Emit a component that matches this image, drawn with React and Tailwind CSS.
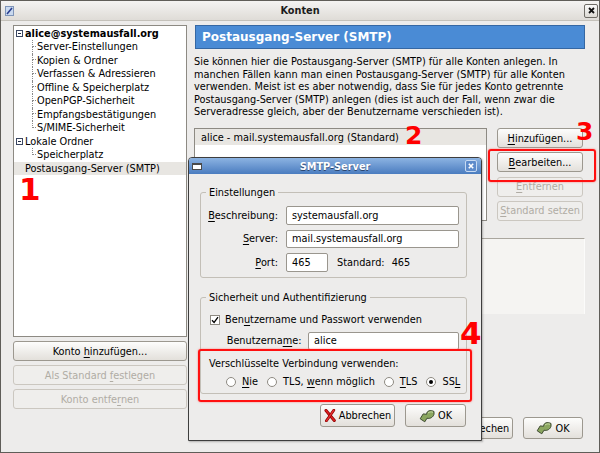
import React from 'react'

function U({ children }) {
    return <span className="underline underline-offset-[1.5px]">{children}</span>
}

function Btn({ children, disabled, className = '' }) {
    const look = disabled
        ? 'border-[#cbc7c0] bg-[#efeeec] text-[#b0aca4]'
        : 'border-[#9c988f] bg-linear-to-b from-[#fdfdfc] to-[#e3e0db] text-black'
    return (
        <div className={`flex items-center justify-center gap-[3px] rounded-[3px] border whitespace-nowrap ${look} ${className}`}>
            {children}
        </div>
    )
}

function OkIcon() {
    return (
        <svg width="16" height="14" viewBox="0 0 16 14">
            <path d="M15 2.5 C11.5 0.6 7.5 1.8 7.6 5.3 L4.2 4.9 L1.2 9.8 L5.8 12.8 L8 9.2 C11.2 10 14.2 8.2 15 5.2 Z" fill="#8ba65f" stroke="#3d4a30" strokeWidth="1" strokeLinejoin="round" />
            <path d="M9 4 C10.5 2.8 12.5 2.6 14 3.3" stroke="#c9dba6" strokeWidth="1" fill="none" />
        </svg>
    )
}

function CancelIcon() {
    return (
        <svg width="12" height="13" viewBox="0 0 12 13">
            <path d="M2 1.5 L10.3 11.5" stroke="#8c0000" strokeWidth="3" strokeLinecap="round" />
            <path d="M2 1.5 L10.3 11.5" stroke="#e02020" strokeWidth="1.6" strokeLinecap="round" />
            <path d="M9.8 1.2 L2.4 11.8" stroke="#8c0000" strokeWidth="2.8" strokeLinecap="round" />
            <path d="M9.8 1.2 L2.4 11.8" stroke="#e83030" strokeWidth="1.4" strokeLinecap="round" />
        </svg>
    )
}

function Radio({ checked }) {
    return (
        <span className="w-[10px] h-[10px] shrink-0 rounded-full border border-[#8e8a82] bg-white flex items-center justify-center">
            {checked && <span className="w-[4px] h-[4px] rounded-full bg-black" />}
        </span>
    )
}

const tree = [
    { label: 'alice@systemausfall.org', kind: 'root', bold: true },
    { label: 'Server-Einstellungen', kind: 'child' },
    { label: 'Kopien & Ordner', kind: 'child' },
    { label: 'Verfassen & Adressieren', kind: 'child' },
    { label: 'Offline & Speicherplatz', kind: 'child' },
    { label: 'OpenPGP-Sicherheit', kind: 'child' },
    { label: 'Empfangsbestätigungen', kind: 'child' },
    { label: 'S/MIME-Sicherheit', kind: 'child', last: true },
    { label: 'Lokale Ordner', kind: 'root' },
    { label: 'Speicherplatz', kind: 'child', last: true },
    { label: 'Postausgang-Server (SMTP)', kind: 'leaf', selected: true },
]

export default function App() {
    return (
        <div className="w-[600px] h-[453px] relative overflow-hidden bg-[#edeceb] border border-[#5f5d58] font-['DejaVu_Sans',sans-serif] text-[9.75px] leading-[13px] text-black">
            {/* Titelleiste */}
            <div className="h-[20px] grid grid-cols-[1fr_auto_1fr] items-center bg-linear-to-b from-[#f4f3f2] to-[#dfdcd7] border-b border-[#c4c1ba]">
                <div className="pl-[4px]">
                    <svg width="9" height="10" viewBox="0 0 9 10">
                        <rect x="0.5" y="0.5" width="8" height="9" fill="#c9d9ef" stroke="#7f95b8" />
                        <path d="M2 8 L7 2" stroke="#2b3f8f" strokeWidth="1.6" />
                    </svg>
                </div>
                <div className="font-bold text-[#1c1c1c]">Konten</div>
                <div className="flex justify-end pr-[1px]">
                    <div className="w-[14px] h-[14px] rounded-[2px] border border-[#6f6c66] bg-linear-to-b from-[#fafafa] to-[#dddad4] flex items-center justify-center">
                        <svg width="7" height="7" viewBox="0 0 7 7">
                            <path d="M1 1 L6 6 M6 1 L1 6" stroke="#111" strokeWidth="1.8" />
                        </svg>
                    </div>
                </div>
            </div>

            <div className="flex pl-[12px] pt-[4px]">
                {/* linke Spalte */}
                <div className="w-[174px] flex flex-col">
                    <div className="h-[312px] bg-white border border-[#8d8a83] pt-[0.5px]">
                        {tree.map((row) => (
                            <div key={row.label} className={`h-[13.5px] flex items-center whitespace-nowrap ${row.selected ? 'bg-[#e8e6e2]' : ''}`}>
                                {row.kind === 'root' && (
                                    <span className="ml-[2px] mr-[2px] w-[7px] h-[7px] border border-[#3a4661] bg-white flex items-center justify-center">
                                        <span className="w-[3px] h-px bg-[#1f2a44]" />
                                    </span>
                                )}
                                {row.kind === 'child' && (
                                    <span className="ml-[18px] mr-[1px] w-[4px] self-stretch flex flex-col">
                                        <span className="h-1/2 border-l border-b border-dotted border-[#8a8a8a]" />
                                        <span className={`flex-1 ${row.last ? '' : 'border-l border-dotted border-[#8a8a8a]'}`} />
                                    </span>
                                )}
                                {row.kind === 'leaf' && <span className="w-[11px]" />}
                                <span className={row.bold ? 'font-bold' : ''}>{row.label}</span>
                            </div>
                        ))}
                    </div>
                    <div className="mt-[4px] flex flex-col gap-[4px]">
                        <Btn className="h-[20px]"><span>Konto <U>h</U>inzufügen...</span></Btn>
                        <Btn disabled className="h-[20px]"><span>Als Standard <U>f</U>estlegen</span></Btn>
                        <Btn disabled className="h-[20px]"><span>Konto entfe<U>r</U>nen</span></Btn>
                    </div>
                </div>

                {/* rechte Spalte */}
                <div className="ml-[7px] w-[391px] flex flex-col">
                    <div className="ml-[1px] h-[24px] bg-[#4a8bd5] border border-[#3567a3] flex items-center pl-[6px] text-white font-bold text-[12px]">
                        Postausgang-Server (SMTP)
                    </div>
                    <p className="mt-[7px] leading-[12.5px] whitespace-nowrap">
                        Sie können hier die Postausgang-Server (SMTP) für alle Konten anlegen. In<br />
                        manchen Fällen kann man einen Postausgang-Server (SMTP) für alle Konten<br />
                        verwenden. Meist ist es aber notwendig, dass Sie für jedes Konto getrennte<br />
                        Postausgang-Server (SMTP) anlegen (dies ist auch der Fall, wenn zwar die<br />
                        Serveradresse gleich, aber der Benutzername verschieden ist).
                    </p>
                    <div className="mt-[9.5px] flex">
                        <div className="w-[293px] h-[93px] bg-white border border-[#8d8a83]">
                            <div className="h-[16px] bg-[#e8e6e2] flex items-center pl-[6px]">
                                alice - mail.systemausfall.org (Standard)
                            </div>
                        </div>
                        <div className="ml-[10px] w-[86px] h-[93px] flex flex-col justify-between">
                            <Btn className="h-[20px]"><span><U>H</U>inzufügen...</span></Btn>
                            <Btn className="h-[20px]"><span><U>B</U>earbeiten...</span></Btn>
                            <Btn disabled className="h-[20px]"><span><U>E</U>ntfernen</span></Btn>
                            <Btn disabled className="h-[20px]"><span><U>S</U>tandard setzen</span></Btn>
                        </div>
                    </div>
                    <div className="mt-[17px] h-[76px] bg-[#f5f4f2] border-t border-[#aaa69e] border-r border-r-[#fbfbfa]" />
                    <div className="mt-[103px] flex justify-end gap-[10px] pr-[2px]">
                        <Btn className="w-[75px] h-[22px]"><CancelIcon /><span>Abbrechen</span></Btn>
                        <Btn className="w-[60px] h-[22px]"><OkIcon /><span>OK</span></Btn>
                    </div>
                </div>
            </div>

            {/* Dialog SMTP-Server */}
            <div className="absolute left-[187px] top-[156px] w-[294px] h-[284px] bg-[#edeceb] border border-[#3e3e3e] rounded-t-[4px] shadow-[1px_1px_2px_rgba(0,0,0,0.25)]">
                <div className="h-[16px] grid grid-cols-[1fr_auto_1fr] items-center bg-linear-to-b from-[#8cb3e2] to-[#4a7cbf] rounded-t-[3px]">
                    <div className="pl-[3px]">
                        <div className="w-[10px] h-[7px] bg-white border border-[#4a4a4a] border-t-2" />
                    </div>
                    <div className="font-bold text-white [text-shadow:0_1px_0_#2a4670]">SMTP-Server</div>
                    <div className="flex justify-end pr-[4px]">
                        <div className="w-[12px] h-[12px] rounded-[2px] border border-[#c7daf2] bg-[#5d8bcb] flex items-center justify-center">
                            <svg width="6" height="6" viewBox="0 0 6 6">
                                <path d="M0.8 0.8 L5.2 5.2 M5.2 0.8 L0.8 5.2" stroke="#fff" strokeWidth="1.6" />
                            </svg>
                        </div>
                    </div>
                </div>

                <div className="pl-[11px]">
                    {/* Einstellungen */}
                    <div className="relative mt-[18px] w-[267px] h-[86px] border border-[#c3bfb7] rounded-[3px] pt-[13px] pr-[7px] flex flex-col gap-[5px]">
                        <span className="absolute -top-[7px] left-[5px] px-[3px] bg-[#edeceb]">Einstellungen</span>
                        <div className="h-[18.5px] flex items-center">
                            <span className="w-[77px] text-right"><U>B</U>eschreibung:</span>
                            <div className="ml-[8px] flex-1 h-full bg-white border border-[#9a968e] rounded-[2px] pl-[5px] flex items-center">systemausfall.org</div>
                        </div>
                        <div className="h-[18.5px] flex items-center">
                            <span className="w-[77px] text-right"><U>S</U>erver:</span>
                            <div className="ml-[8px] flex-1 h-full bg-white border border-[#9a968e] rounded-[2px] pl-[5px] flex items-center">mail.systemausfall.org</div>
                        </div>
                        <div className="h-[18.5px] flex items-center">
                            <span className="w-[77px] text-right"><U>P</U>ort:</span>
                            <div className="ml-[8px] w-[42px] h-full bg-white border border-[#9a968e] rounded-[2px] pl-[5px] flex items-center">465</div>
                            <span className="ml-[9px]">Standard:</span>
                            <span className="ml-[7px]">465</span>
                        </div>
                    </div>

                    {/* Sicherheit */}
                    <div className="relative mt-[19px] w-[267px] h-[97px] border border-[#c3bfb7] rounded-[3px] pt-[15px] pr-[7px]">
                        <span className="absolute -top-[7px] left-[5px] px-[3px] bg-[#edeceb]">Sicherheit und Authentifizierung</span>
                        <div className="h-[13px] flex items-center pl-[9px] gap-[5px]">
                            <span className="w-[10px] h-[10px] border border-[#8e8a82] bg-white flex items-center justify-center">
                                <svg width="8" height="8" viewBox="0 0 8 8">
                                    <path d="M1 4.2 L3.1 6.4 L7 1.2" stroke="#000" strokeWidth="1.3" fill="none" />
                                </svg>
                            </span>
                            <span>Ben<U>u</U>tzername und Passwort verwenden</span>
                        </div>
                        <div className="mt-[5.7px] h-[18.3px] flex items-center pl-[25.7px]">
                            <span className="w-[81.3px] whitespace-nowrap">Benutzerna<U>m</U>e:</span>
                            <div className="flex-1 h-full bg-white border border-[#9a968e] rounded-[2px] pl-[5px] flex items-center">alice</div>
                        </div>
                        <div className="mt-[7.5px] h-[13px] flex items-center pl-[8px] whitespace-nowrap">Verschlüsselte Verbindung verwenden:</div>
                        <div className="mt-[4.7px] h-[13px] flex items-center pl-[25px] gap-[9px] whitespace-nowrap">
                            <span className="flex items-center gap-[6px]"><Radio /><span><U>N</U>ie</span></span>
                            <span className="flex items-center gap-[6px]"><Radio /><span>TLS, <U>w</U>enn möglich</span></span>
                            <span className="flex items-center gap-[6px]"><Radio /><span><U>T</U>LS</span></span>
                            <span className="flex items-center gap-[6px]"><Radio checked /><span>SS<U>L</U></span></span>
                        </div>
                    </div>

                    <div className="mt-[10px] w-[267px] flex justify-end gap-[10px] pr-[1px]">
                        <Btn className="w-[75px] h-[23px]"><CancelIcon /><span>Abbrechen</span></Btn>
                        <Btn className="w-[61px] h-[23px]"><OkIcon /><span>OK</span></Btn>
                    </div>
                </div>
            </div>

            {/* Markierungen */}
            <div className="absolute left-[487px] top-[148px] w-[108px] h-[33px] border-2 border-[#ff1010] rounded-[3px] shadow-[0_0_2px_#ff7070]" />
            <div className="absolute left-[197px] top-[348px] w-[274px] h-[53px] border-2 border-[#ff1010] rounded-[3px] shadow-[0_0_2px_#ff7070]" />
            <span className="absolute left-[18px] top-[173px] text-[31px] leading-[31px] font-bold text-[#ff0000]">1</span>
            <span className="absolute left-[404px] top-[122px] text-[25px] leading-[25px] font-bold text-[#ff0000]">2</span>
            <span className="absolute left-[575px] top-[118px] text-[25px] leading-[25px] font-bold text-[#ff0000]">3</span>
            <span className="absolute left-[459px] top-[317px] text-[31px] leading-[31px] font-bold text-[#ff0000]">4</span>
        </div>
    )
}
